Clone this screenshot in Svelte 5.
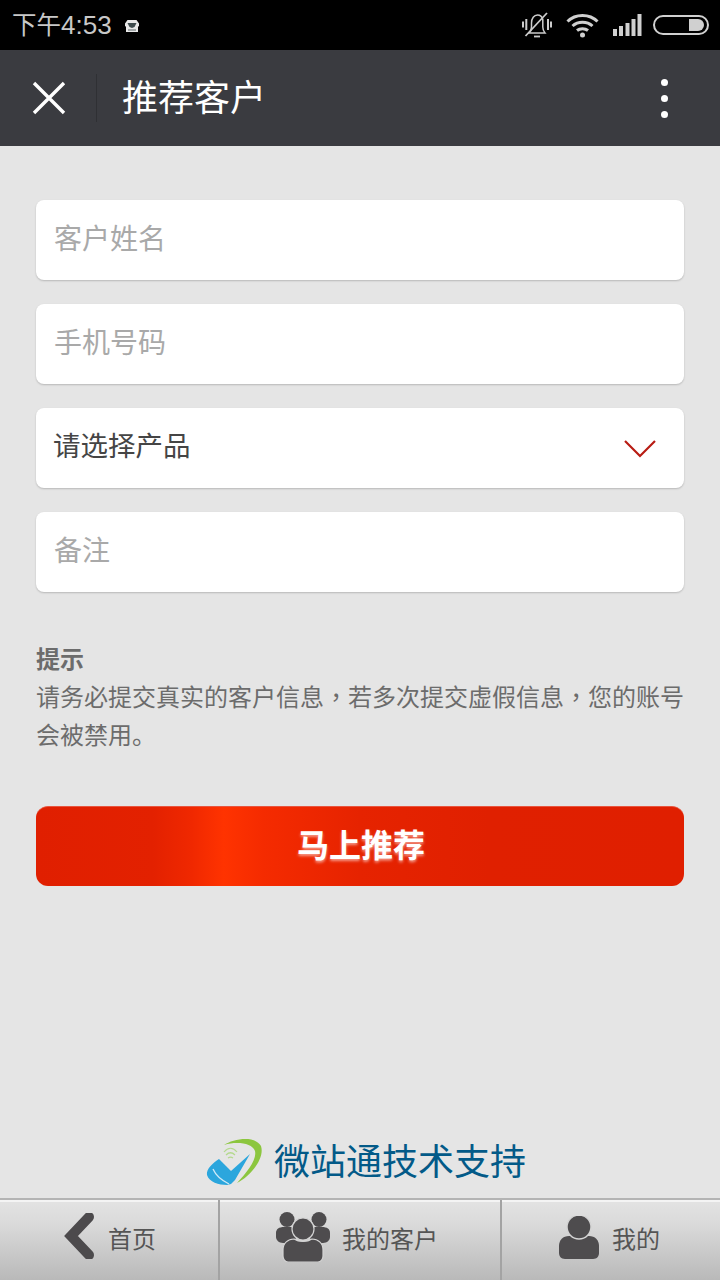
<script>
  const fields = ['客户姓名', '手机号码'];
</script>

<div class="page">
  <div class="status">
    <div class="status-left">
      <span class="time">下午<span class="digits">4:53</span></span>
      <svg class="tiny" width="16" height="14" viewBox="0 0 16 14">
        <path d="M1 4.500 3.500 1h9L15 4.500V7l-1 .8V13H2V7.800L1 7z" fill="#e8e8e8"/>
        <path d="M3.500 4h9L10.500 8 8 9 5.500 8z" fill="#3d4a4c"/>
        <path d="M4 10.500h8v1H4z" fill="#5a6668"/>
      </svg>
    </div>
    <div class="status-right">
      <svg width="30" height="26" viewBox="0 0 30 26" fill="none" stroke="#ccc">
        <path d="M7 21c1.500-1.500 2.500-3 2.500-6v-4c0-4.500 2.500-8 6-8 2.500 0 4.500 1.500 5.300 4.500v7.500c0 3 .9 4.500 2.200 6z" stroke-width="1.500"/>
        <path d="M12 24.500h6" stroke-width="1.800"/>
        <path d="M3.500 24 25 1" stroke-width="1.800"/>
        <path d="M1 9.500v6M4.300 7v11M26 7v11M29 9.500v6" stroke-width="2"/>
      </svg>
      <svg width="33" height="25" viewBox="0 0 33 25" fill="none" stroke="#d0d0d0" stroke-width="3">
        <path d="M1.500 8.500C9.500 .5 23.500 .5 31.500 8.500"/>
        <path d="M6.500 13c5.500-5 14.500-5 20 0"/>
        <path d="M11 17.500c3-2.500 8-2.500 11 0"/>
        <circle cx="16.500" cy="22" r="2.500" fill="#d0d0d0" stroke="none"/>
      </svg>
      <svg width="29" height="23" viewBox="0 0 29 23" fill="#d0d0d0">
        <rect x="0" y="15" width="4" height="7"/>
        <rect x="6" y="12" width="4" height="10"/>
        <rect x="12.500" y="9" width="4" height="13"/>
        <rect x="18.500" y="5" width="4" height="17"/>
        <rect x="24.500" y="0" width="4" height="22"/>
      </svg>
      <div class="battery"><div class="charge"></div></div>
    </div>
  </div>

  <header class="bar">
    <svg class="close" width="34" height="34" viewBox="0 0 34 34" fill="none" stroke="#fff" stroke-width="3.400">
      <path d="M2 2 32 32M32 2 2 32"/>
    </svg>
    <div class="sep"></div>
    <h1>推荐客户</h1>
    <div class="dots"><i></i><i></i><i></i></div>
  </header>

  <main class="content">
    <form class="form">
      {#each fields as f}
        <div class="field"><input placeholder={f} /></div>
      {/each}
      <div class="field select">
        <span>请选择产品</span>
        <svg width="32" height="20" viewBox="0 0 32 20" fill="none" stroke="#b81c14" stroke-width="2.200">
          <path d="M1 2 16 17 31 2"/>
        </svg>
      </div>
      <div class="field"><input placeholder="备注" /></div>
    </form>

    <div class="tip">
      <strong>提示</strong>
      <p>请务必提交真实的客户信息<span class="comma">，</span>若多次提交虚假信息<span class="comma">，</span>您的账号<br />会被禁用。</p>
    </div>

    <button class="submit" type="button">马上推荐</button>

    <div class="brand">
      <svg class="logo" width="58" height="50" viewBox="0 0 58 50" fill="none">
        <path d="M19 7C28 1 50-3 56 8 60 20 46 38 32 45 42 34 52 22 50 13 47 5 32 3 19 7Z" fill="#8cc63f"/>
        <path d="M19 14c4-5 9-5 13 0M21 17c3-3 6-3 9 0M23 20c2-1.500 3-1.500 5 0" stroke="#b4d98e" stroke-width="1.200"/>
        <path d="M14 21 26 33 45 16 30 42 26 46 22 47C14 47 4 44 2 37 1 31 8 25 14 21Z" fill="#2ba6dd"/>
        <path d="M8 31C11 38 18 43 24 46" stroke="#cfeaf7" stroke-width="1.300"/>
      </svg>
      <span>微站通技术支持</span>
    </div>
  </main>

  <nav class="tabs">
    <a class="tab t1" href="#home">
      <svg class="ic1" width="32" height="46" viewBox="0 0 32 46"><path d="M25 4 7 23l18 19" fill="none" stroke="#4c4a4c" stroke-width="10" stroke-linecap="round"/></svg>
      <span>首页</span>
    </a>
    <a class="tab t2" href="#customers">
      <svg class="ic2" width="54" height="50" viewBox="0 0 54 50" fill="#4e4c4e" stroke="#d4d4d4" stroke-width="1.200">
        <circle cx="11" cy="7.500" r="7.500" stroke="none"/>
        <circle cx="43" cy="7.500" r="7.500" stroke="none"/>
        <path d="M0 21c0-4 3-6 8-6h6c4 0 6 2 6 6v4c0 3-3 6-7 6H7c-4 0-7-3-7-6z" stroke="none"/>
        <path d="M54 21c0-4-3-6-8-6h-6c-4 0-6 2-6 6v4c0 3 3 6 7 6h6c4 0 7-3 7-6z" stroke="none"/>
        <circle cx="27" cy="17" r="11"/>
        <path d="M7 38c0-7 5-11 11-11 3 2 6 2.500 9 2.500s6-.5 9-2.500c6 0 11 4 11 11v6c0 3-2 6-5 6H12c-3 0-5-3-5-6z"/>
      </svg>
      <span>我的客户</span>
    </a>
    <a class="tab t3" href="#me">
      <svg class="ic3" width="40" height="43" viewBox="0 0 40 43" fill="#4e4c4e" stroke="#d4d4d4" stroke-width="1.500">
        <path d="M0 30c0-6 4-10 10-10h20c6 0 10 4 10 10v7c0 3-2 6-6 6H6c-4 0-6-3-6-6z" stroke="none"/>
        <circle cx="20" cy="11" r="12"/>
      </svg>
      <span>我的</span>
    </a>
  </nav>
</div>

<style>
  :global(body) { margin: 0; }
  .page {
    width: 720px;
    height: 1280px;
    display: flex;
    flex-direction: column;
    background: #e5e5e5;
    font-family: "Noto Sans CJK SC", "Liberation Sans", sans-serif;
    overflow: hidden;
  }
  .status {
    height: 50px;
    flex: none;
    background: #000;
    display: flex;
    align-items: center;
    justify-content: space-between;
    padding: 0 11px 0 12px;
    box-sizing: border-box;
  }
  .status-left { display: flex; align-items: center; gap: 12px; }
  .time { color: #c8c8c8; font-size: 24.500px; line-height: 50px; margin-top: -2px; }
  .digits { font-family: "Liberation Sans", sans-serif; font-size: 26px; }
  .tiny { margin-top: 1px; }
  .status-right { display: flex; align-items: center; gap: 14px; }
  .battery {
    width: 56px;
    height: 20px;
    box-sizing: border-box;
    border: 2px solid #d0d0d0;
    border-radius: 10px;
    padding: 2px 3px;
    display: flex;
    justify-content: flex-end;
    margin-left: -3px;
  }
  .charge { width: 15px; background: #d0d0d0; border-radius: 0 6px 6px 0; }
  .bar {
    height: 96px;
    flex: none;
    background: #3a3b40;
    display: flex;
    align-items: center;
    padding: 0 52px 0 32px;
    box-sizing: border-box;
  }
  .close { flex: none; }
  .sep { width: 1px; height: 48px; background: #2f3034; margin: 0 25px 0 30px; flex: none; }
  h1 { margin: -6px 0 0; color: #fff; font-size: 36px; font-weight: 400; line-height: 1; flex: 1; }
  .dots { display: flex; flex-direction: column; gap: 9px; }
  .dots i { width: 7px; height: 7px; border-radius: 50%; background: #fff; display: block; }
  .content {
    flex: 1;
    display: flex;
    flex-direction: column;
    padding: 54px 36px 0;
    min-height: 0;
  }
  .form { display: flex; flex-direction: column; gap: 24px; }
  .field {
    height: 80px;
    box-sizing: border-box;
    background: #fff;
    border-radius: 8px;
    box-shadow: 0 1px 2px rgba(0, 0, 0, .2);
    display: flex;
    align-items: center;
    padding: 0 18px;
  }
  .field input {
    flex: 1;
    min-width: 0;
    border: 0;
    outline: 0;
    padding: 0;
    margin-top: -7px;
    background: transparent;
    font: inherit;
    font-size: 28px;
    color: #444;
  }
  .field input::placeholder { color: #a9a9a9; opacity: 1; }
  .select { justify-content: space-between; padding-right: 28px; }
  .select span { font-size: 27.500px; color: #454545; margin: -8px 0 0 -1px; }
  .select svg { margin-top: 2px; }
  .tip { margin-top: 47px; color: #6c6c6c; font-size: 24px; line-height: 38px; }
  .tip strong { display: block; font-weight: 700; }
  .tip p { margin: 0; }
  .comma { font-family: "Noto Sans CJK TC", "Noto Sans CJK SC", sans-serif; }
  .submit {
    margin-top: 53px;
    height: 80px;
    flex: none;
    border: 0;
    border-top: 1px solid #e8553f;
    border-radius: 12px;
    background: linear-gradient(90deg, #e01f00 0, #e32100 18%, #f02800 24%, #ff3300 29%, #f52b00 35%, #e62300 50%, #e02000 70%, #e01f00 100%);
    color: #fff;
    font: inherit;
    font-size: 32px;
    font-weight: 700;
    text-shadow: 0 2px 3px rgba(255, 255, 255, .55);
    padding: 0 0 8px 2px;
  }
  .brand {
    margin-top: auto;
    margin-bottom: 12px;
    display: flex;
    align-items: center;
    justify-content: center;
    gap: 11px;
    height: 54px;
    color: #035a88;
    font-size: 36px;
    padding-left: 11px;
  }
  .logo { margin-top: 8px; flex: none; }
  .tabs {
    height: 82px;
    flex: none;
    box-sizing: border-box;
    border-top: 2px solid #b4b4b4;
    display: flex;
    background: linear-gradient(180deg, #e3e3e3 0, #dadada 30%, #b9b9b9 100%);
    box-shadow: inset 0 2px 0 #f4f4f4;
  }
  .tab {
    display: flex;
    align-items: center;
    justify-content: center;
    color: #555;
    font-size: 24px;
    text-decoration: none;
    box-sizing: border-box;
    padding-top: 2px;
  }
  .tab span { margin-bottom: 8px; }
  .t1 { width: 220px; gap: 12px; border-right: 2px solid #a3a3a3; padding-left: 2px; }
  .t2 { width: 282px; gap: 12px; border-right: 2px solid #a3a3a3; padding-right: 6px; }
  .t3 { flex: 1; gap: 13px; padding-right: 3px; }
  .ic1 { margin-bottom: 10px; }
  .ic2 { margin-bottom: 8px; }
  .ic3 { margin-bottom: 7px; }
</style>
